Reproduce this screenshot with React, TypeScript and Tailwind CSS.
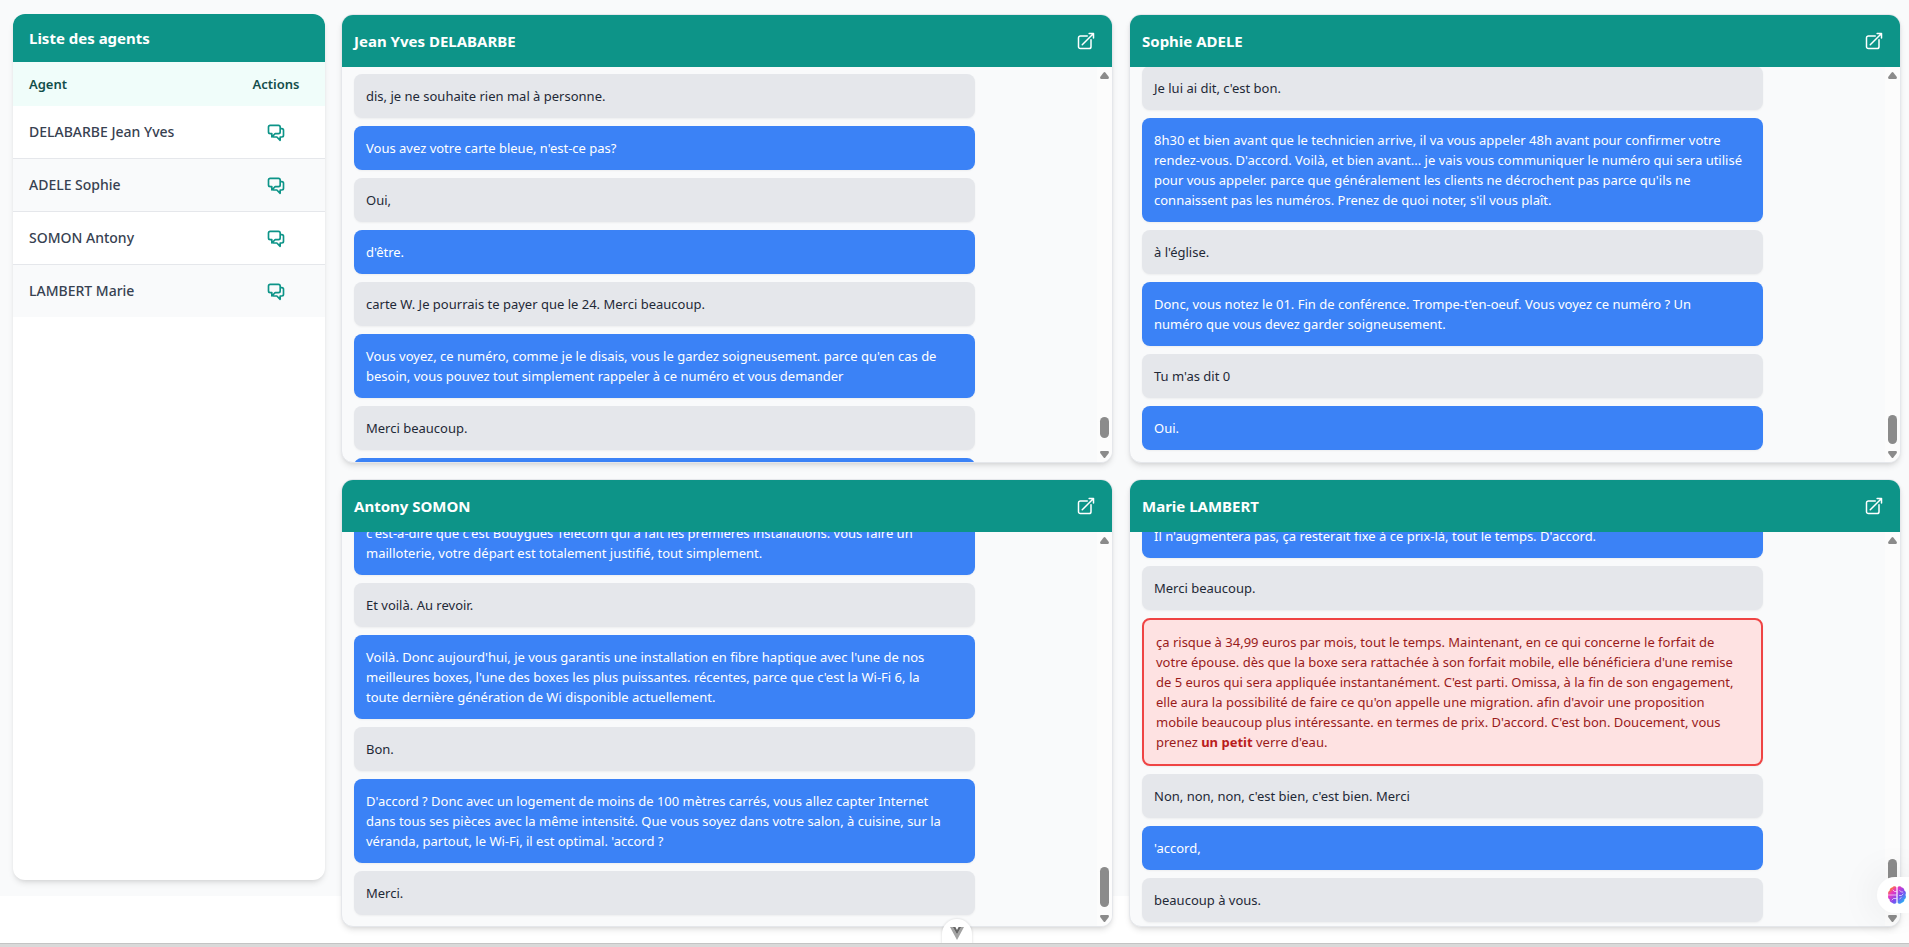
import React from "react";

type Kind = "client" | "agent" | "alert";
type Message = { kind: Kind; text: React.ReactNode };
type Chat = {
  name: string;
  position: string;
  thumb: number;
  rest: number;
  messages: Message[];
};

const agents = ["DELABARBE Jean Yves", "ADELE Sophie", "SOMON Antony", "LAMBERT Marie"];

const chats: Chat[] = [
  {
    name: "Jean Yves DELABARBE",
    position: "justify-start pt-[7px]",
    thumb: 21,
    rest: 13,
    messages: [
      { kind: "client", text: "dis, je ne souhaite rien mal à personne." },
      { kind: "agent", text: "Vous avez votre carte bleue, n'est-ce pas?" },
      { kind: "client", text: "Oui," },
      { kind: "agent", text: "d'être." },
      { kind: "client", text: "carte W. Je pourrais te payer que le 24. Merci beaucoup." },
      {
        kind: "agent",
        text: "Vous voyez, ce numéro, comme je le disais, vous le gardez soigneusement. parce qu'en cas de\nbesoin, vous pouvez tout simplement rappeler à ce numéro et vous demander",
      },
      { kind: "client", text: "Merci beaucoup." },
      { kind: "agent", text: "" },
    ],
  },
  {
    name: "Sophie ADELE",
    position: "justify-end pb-3",
    thumb: 29,
    rest: 7,
    messages: [
      { kind: "client", text: "Je lui ai dit, c'est bon." },
      {
        kind: "agent",
        text: "8h30 et bien avant que le technicien arrive, il va vous appeler 48h avant pour confirmer votre\nrendez-vous. D'accord. Voilà, et bien avant... je vais vous communiquer le numéro qui sera utilisé\npour vous appeler. parce que généralement les clients ne décrochent pas parce qu'ils ne\nconnaissent pas les numéros. Prenez de quoi noter, s'il vous plaît.",
      },
      { kind: "client", text: "à l'église." },
      {
        kind: "agent",
        text: "Donc, vous notez le 01. Fin de conférence. Trompe-t'en-oeuf. Vous voyez ce numéro ? Un\nnuméro que vous devez garder soigneusement.",
      },
      { kind: "client", text: "Tu m'as dit 0" },
      { kind: "agent", text: "Oui." },
    ],
  },
  {
    name: "Antony SOMON",
    position: "justify-end pb-[11px]",
    thumb: 40,
    rest: 8,
    messages: [
      {
        kind: "agent",
        text: "c'est-à-dire que c'est Bouygues Telecom qui a fait les premières installations. vous faire un\nmailloterie, votre départ est totalement justifié, tout simplement.",
      },
      { kind: "client", text: "Et voilà. Au revoir." },
      {
        kind: "agent",
        text: "Voilà. Donc aujourd'hui, je vous garantis une installation en fibre haptique avec l'une de nos\nmeilleures boxes, l'une des boxes les plus puissantes. récentes, parce que c'est la Wi-Fi 6, la\ntoute dernière génération de Wi disponible actuellement.",
      },
      { kind: "client", text: "Bon." },
      {
        kind: "agent",
        text: "D'accord ? Donc avec un logement de moins de 100 mètres carrés, vous allez capter Internet\ndans tous ses pièces avec la même intensité. Que vous soyez dans votre salon, à cuisine, sur la\nvéranda, partout, le Wi-Fi, il est optimal. 'accord ?",
      },
      { kind: "client", text: "Merci." },
    ],
  },
  {
    name: "Marie LAMBERT",
    position: "justify-end pb-1",
    thumb: 40,
    rest: 16,
    messages: [
      { kind: "agent", text: "Il n'augmentera pas, ça resterait fixe à ce prix-là, tout le temps. D'accord." },
      { kind: "client", text: "Merci beaucoup." },
      {
        kind: "alert",
        text: (
          <>
            {
              "ça risque à 34,99 euros par mois, tout le temps. Maintenant, en ce qui concerne le forfait de\nvotre épouse. dès que la boxe sera rattachée à son forfait mobile, elle bénéficiera d'une remise\nde 5 euros qui sera appliquée instantanément. C'est parti. Omissa, à la fin de son engagement,\nelle aura la possibilité de faire ce qu'on appelle une migration. afin d'avoir une proposition\nmobile beaucoup plus intéressante. en termes de prix. D'accord. C'est bon. Doucement, vous\nprenez "
            }
            <strong className="font-bold text-[#b91c1c]">un petit</strong> verre d'eau.
          </>
        ),
      },
      { kind: "client", text: "Non, non, non, c'est bien, c'est bien. Merci" },
      { kind: "agent", text: "'accord," },
      { kind: "client", text: "beaucoup à vous." },
    ],
  },
];

const bubble: Record<Kind, string> = {
  client: "bg-[#e5e7eb] text-[#1f2937]",
  agent: "bg-[#3b82f6] text-white",
  alert: "bg-[#fee2e2] text-[#991b1b] border-2 border-[#ef4444]",
};

function ChatIcon() {
  return (
    <svg viewBox="0 0 24 24" className="size-5" fill="none" stroke="currentColor" strokeWidth="2" strokeLinecap="round" strokeLinejoin="round" aria-hidden="true">
      <path d="M17 8h2a2 2 0 0 1 2 2v6a2 2 0 0 1-2 2h-2v4l-4-4H9a1.994 1.994 0 0 1-1.414-.586m0 0L11 14h4a2 2 0 0 0 2-2V6a2 2 0 0 0-2-2H5a2 2 0 0 0-2 2v6a2 2 0 0 0 2 2h2v4l.586-.586Z" />
    </svg>
  );
}

function OpenIcon() {
  return (
    <svg viewBox="0 0 24 24" className="size-5" fill="none" stroke="currentColor" strokeWidth="1.8" strokeLinecap="round" strokeLinejoin="round" aria-hidden="true">
      <path d="M13.5 6H5.25A2.25 2.25 0 0 0 3 8.25v10.5A2.25 2.25 0 0 0 5.25 21h10.5A2.25 2.25 0 0 0 18 18.75V10.5m-10.5 6L21 3m0 0h-5.25M21 3v5.25" />
    </svg>
  );
}

function Scrollbar({ thumb, rest }: { thumb: number; rest: number }) {
  return (
    <div aria-hidden="true" className="flex w-[15px] shrink-0 flex-col items-center bg-[#fcfcfc] pt-[5px] pb-1 text-[#8b8b8b]">
      <svg viewBox="0 0 9 7" className="h-[7px] w-[9px]" fill="currentColor">
        <path d="M3.6.6Q4.5-.5 5.4.6L8.800 5Q9.200 7 8 7H1Q-.2 7 .2 5Z" />
      </svg>
      <div className="flex-1" />
      <div className="w-[9px] rounded-full bg-[#8b8b8b]" style={{ height: thumb }} />
      <div style={{ height: rest }} />
      <svg viewBox="0 0 9 7" className="h-[7px] w-[9px]" fill="currentColor">
        <path d="M3.6 6.4Q4.5 7.5 5.4 6.4L8.800 2Q9.200 0 8 0H1Q-.2 0 .2 2Z" />
      </svg>
    </div>
  );
}

function ChatPanel({ chat }: { chat: Chat }) {
  return (
    <section className="flex min-h-0 min-w-0 flex-col overflow-hidden rounded-xl border border-[#e5e7eb] bg-[#f9fafb] shadow-md">
      <header className="flex h-[52px] shrink-0 items-center justify-between bg-[#0d9488] px-3 text-white">
        <h2 className="text-[15px] leading-6 font-bold">{chat.name}</h2>
        <button type="button" aria-label={`Ouvrir ${chat.name}`} className="mr-1">
          <OpenIcon />
        </button>
      </header>
      <div className="flex min-h-0 flex-1">
        <div className={`flex min-w-0 flex-1 flex-col gap-2 overflow-hidden px-3 ${chat.position}`}>
          {chat.messages.map((m, i) => (
            <div key={i} className={`min-h-11 w-[85%] shrink-0 rounded-lg p-3 whitespace-pre-line shadow-xs ${bubble[m.kind]}`}>
              {m.text}
            </div>
          ))}
        </div>
        <Scrollbar thumb={chat.thumb} rest={chat.rest} />
      </div>
    </section>
  );
}

function Brain() {
  return (
    <svg viewBox="0 0 20 20" className="size-5" aria-hidden="true">
      <defs>
        <linearGradient id="brain" x1="0" y1="0" x2="1" y2="1">
          <stop offset=".1" stopColor="#ff8a1f" />
          <stop offset=".3" stopColor="#e935c1" />
          <stop offset=".6" stopColor="#7c4df0" />
          <stop offset=".9" stopColor="#22b8f5" />
        </linearGradient>
      </defs>
      <path
        fill="url(#brain)"
        d="M9.400 2.600v14.800C8.800 19 6.400 19.300 5.200 17.700 3.500 17.600 2.400 16.200 2.700 14.600 1 13.500.6 11.600 1.500 10 .6 8.200 1.200 6.500 2.700 5.600 2.500 3.800 3.700 2.500 5.200 2.400 6.400.7 8.800.9 9.400 2.600ZM10.600 2.600C11.200.9 13.600.7 14.800 2.400 16.300 2.500 17.500 3.800 17.300 5.600 18.800 6.500 19.400 8.200 18.500 10 19.400 11.600 19 13.500 17.300 14.600 17.600 16.200 16.500 17.600 14.800 17.700 13.600 19.300 11.200 19 10.600 17.400Z"
      />
      <path fill="none" stroke="#fff" strokeOpacity=".8" strokeWidth=".8" strokeLinecap="round" d="M9.200 6.500H7.500L6 5M2.500 10h6.700M9.200 13.500H6.500L5 15M12.800 5.500l1.500 1.500h1.500M12.500 10.500h2l1.500-1.500M12.800 14l1.300-1.500" />
    </svg>
  );
}

export default function App() {
  return (
    <div className="relative flex min-h-screen flex-col overflow-hidden bg-white font-['Noto_Sans','Open_Sans',sans-serif] text-[13px] leading-5">
      <div className="flex h-[896px] gap-4 bg-[#f9fafb] pt-3.5 pr-2 pl-[13px]">
        <aside className="mb-4 w-[312px] shrink-0 overflow-hidden rounded-xl bg-white shadow-md">
          <h1 className="flex h-12 items-center bg-[#0d9488] px-4 text-[15px] font-bold text-white">Liste des agents</h1>
          <table className="w-full border-separate border-spacing-0">
            <thead>
              <tr className="h-11 bg-[#f0fdfa] text-[#134e4a]">
                <th scope="col" className="p-0 px-4 text-left font-semibold">Agent</th>
                <th scope="col" className="w-[98px] p-0 text-center font-semibold">Actions</th>
              </tr>
            </thead>
            <tbody>
              {agents.map((a) => (
                <tr key={a} className="group h-[53px] text-[#374151] last:h-[52px] even:bg-[#f9fafb]">
                  <td className="border-b border-[#e5e7eb] p-0 px-4 text-sm font-medium group-last:border-0">{a}</td>
                  <td className="border-b border-[#e5e7eb] p-0 group-last:border-0">
                    <button type="button" aria-label={`Discussion ${a}`} className="mx-auto block text-[#0d9488]">
                      <ChatIcon />
                    </button>
                  </td>
                </tr>
              ))}
            </tbody>
          </table>
        </aside>
        <main className="grid h-[913px] min-w-0 flex-1 grid-cols-2 grid-rows-[449fr_448fr] gap-4">
          {chats.map((c) => (
            <ChatPanel key={c.name} chat={c} />
          ))}
        </main>
      </div>
      <button type="button" aria-label="Vue DevTools" className="absolute bottom-1 left-1/2 flex h-6 w-[30px] -translate-x-[13px] justify-center rounded-t-full bg-white pt-2 shadow-[0_0_2px_1px_rgba(0,0,0,0.08)]">
        <svg viewBox="0 0 14 13" className="h-[13px] w-3.5" aria-hidden="true">
          <path fill="#a3a3a3" d="M0 0h2.800L7 7.400 11.200 0H14L7 13Z" />
          <path fill="#666" d="M2.800 0h2.600L7 2.900 8.600 0h2.600L7 7.400Z" />
        </svg>
      </button>
      <button type="button" aria-label="Assistant" className="absolute right-0 bottom-[34px] flex h-9 w-8 items-center rounded-l-full bg-white pl-2.5 shadow-[0_0_40px_rgba(0,0,0,0.1)]">
        <Brain />
      </button>
      <div className="absolute inset-x-0 bottom-0 h-1 border-t border-[#c4c4c4] bg-[#d9d9d9]" />
    </div>
  );
}
